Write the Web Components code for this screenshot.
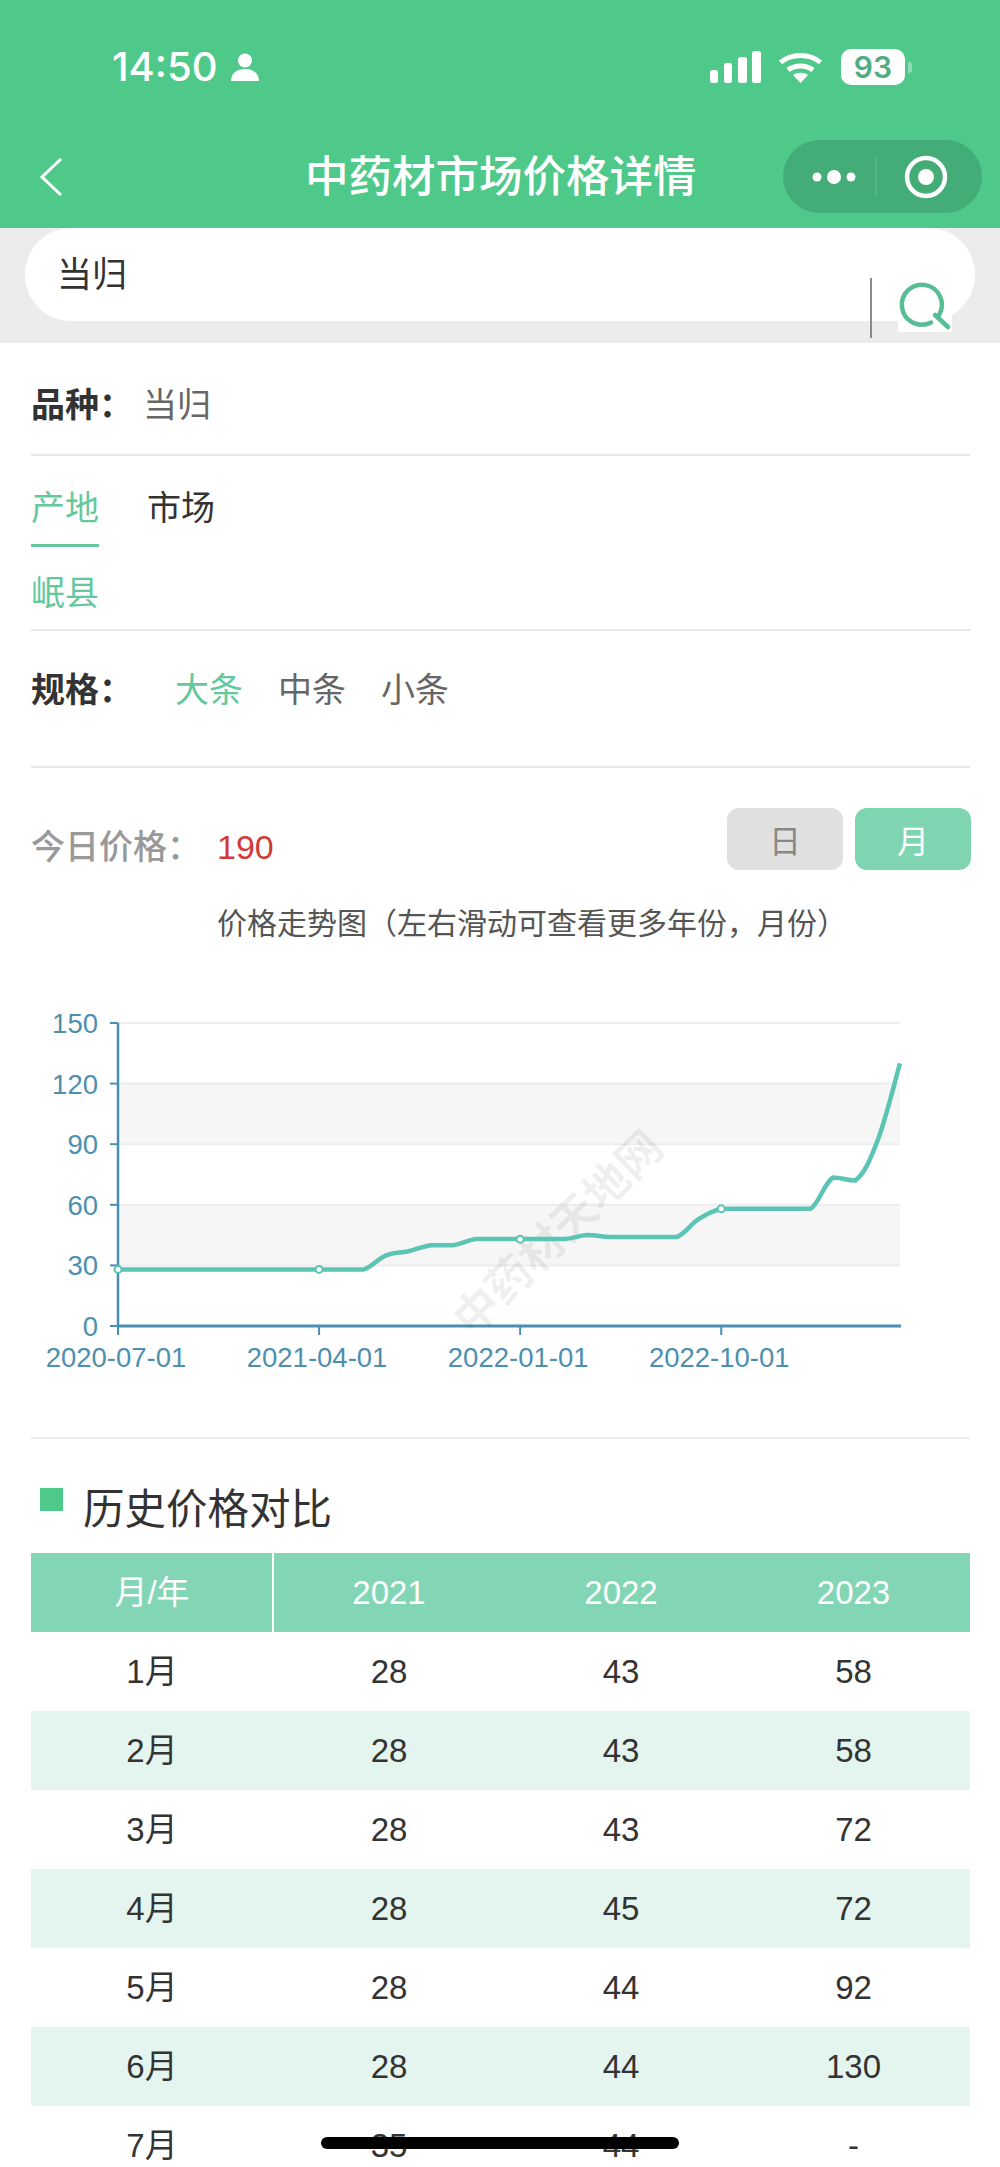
<!DOCTYPE html>
<html lang="zh-CN">
<head>
<meta charset="utf-8">
<title>中药材市场价格详情</title>
<style>
  html, body { margin: 0; padding: 0; background: white; }
  body {
    position: relative;
    width: 1000px;
    height: 2167px;
    overflow: hidden;
    font-family: "Liberation Sans", "Noto Sans CJK SC", sans-serif;
    color: #333;
  }
</style>
</head>
<body>
<status-bar time="14:50" battery="93"></status-bar>
<nav-bar>中药材市场价格详情</nav-bar>
<search-bar>当归</search-bar>
<info-row label="品种">当归</info-row>
<origin-tabs></origin-tabs>
<spec-row label="规格"></spec-row>
<price-row price="190"></price-row>
<price-chart>价格走势图（左右滑动可查看更多年份，月份）</price-chart>
<section-title>历史价格对比</section-title>
<history-table></history-table>
<home-indicator></home-indicator>

<script>
const shadow = (el, html) => {
  el.attachShadow({ mode: 'open' });
  el.shadowRoot.innerHTML = html;
};

customElements.define("status-bar", class extends HTMLElement {
  connectedCallback() {
    if (this.shadowRoot)
      return;
    shadow(this, `
      <style>
        :host {
          display: flex;
          box-sizing: border-box;
          height: 125px;
          padding-top: 9px;
          background: #4fc98a;
          align-items: center;
          color: white;
        }
        .time {
          margin-left: 112px;
          font-family: Inter, "Liberation Sans", sans-serif;
          font-size: 40px;
          font-weight: 500;
          line-height: 48px;
        }
        .person { margin-left: 12px; }
        .signal { margin-left: auto; }
        .wifi { margin-left: 17px; }
        .battery {
          display: flex;
          align-items: center;
          justify-content: center;
          width: 64px;
          height: 36px;
          margin-left: 18px;
          border-radius: 10px;
          background: white;
          color: #52ad84;
          font-family: Inter, "Liberation Sans", sans-serif;
          font-size: 30px;
          font-weight: 600;
          line-height: 36px;
        }
        .tip {
          width: 4px;
          height: 11px;
          margin-left: 3px;
          margin-right: 88px;
          border-radius: 0 3px 3px 0;
          background: #8fdcb5;
        }
      </style>
      <span class=time>${this.getAttribute("time")}</span>
      <svg class=person width=30 height=28 viewBox="0 0 30 28">
        <circle cx=15 cy=7.5 r=7 fill=white />
        <path d="M1 28c0-8 6-12 14-12s14 4 14 12z" fill=white />
      </svg>
      <svg class=signal width=51 height=32 viewBox="0 0 51 32" fill=white>
        <rect x=0 y=19 width=8 height=13 rx=2.5 />
        <rect x=14 y=12 width=8 height=20 rx=2.5 />
        <rect x=28 y=6 width=9 height=26 rx=2.5 />
        <rect x=42 y=0 width=9 height=32 rx=2.5 />
      </svg>
      <svg class=wifi width=45 height=32 viewBox="0 0 45 32" fill=none stroke=white stroke-width=5>
        <path d="M2.5 11.5C13 2 32 2 42.5 11.5" />
        <path d="M10 19c7-5.500 18-5.500 25 0" />
        <path d="M22.500 32l-7.500-8c4-3 11-3 15 0z" fill=white stroke=none />
      </svg>
      <span class=battery>${this.getAttribute("battery")}</span>
      <span class=tip></span>
    `);
  }
});

customElements.define("nav-bar", class extends HTMLElement {
  connectedCallback() {
    if (this.shadowRoot)
      return;
    shadow(this, `
      <style>
        :host {
          display: flex;
          position: relative;
          box-sizing: border-box;
          height: 103px;
          padding-left: 40px;
          background: #4fc98a;
          align-items: center;
          color: white;
        }
        .title {
          margin-left: 243px;
          font-size: 43.500px;
          font-weight: 500;
          line-height: 60px;
          white-space: nowrap;
        }
        .capsule {
          display: flex;
          align-items: center;
          box-sizing: border-box;
          width: 199px;
          height: 73px;
          margin-left: 86px;
          border-radius: 37px;
          background: #43ac77;
        }
        .dots { margin-left: 29px; }
        .sep {
          width: 2px;
          height: 40px;
          margin-left: 19px;
          background: #52b583;
        }
        .target { margin-left: 26px; }
      </style>
      <svg width=22 height=38 viewBox="0 0 22 38" fill=none stroke=white stroke-width=3>
        <path d="M21 1L2 19l19 18" />
      </svg>
      <span class=title><slot></slot></span>
      <div class=capsule>
        <svg class=dots width=44 height=16 viewBox="0 0 44 16" fill=white>
          <circle cx=5 cy=8 r=4.500 />
          <circle cx=22 cy=8 r=7 />
          <circle cx=39 cy=8 r=4.500 />
        </svg>
        <span class=sep></span>
        <svg class=target width=46 height=46 viewBox="0 0 46 46">
          <circle cx=23 cy=23 r=19 fill=none stroke=white stroke-width=4.500 />
          <circle cx=23 cy=23 r=8 fill=white />
        </svg>
      </div>
    `);
  }
});

customElements.define("search-bar", class extends HTMLElement {
  connectedCallback() {
    if (this.shadowRoot)
      return;
    shadow(this, `
      <style>
        :host {
          display: block;
          position: relative;
          box-sizing: border-box;
          height: 115px;
          padding: 0 25px 22px 25px;
          background: #ececec;
        }
        .pill {
          display: flex;
          align-items: center;
          box-sizing: border-box;
          height: 93px;
          padding: 0 0 6px 32px;
          border-radius: 46px;
          background: white;
          color: #333;
          font-size: 35px;
        }
        .sep {
          position: absolute;
          left: 870px;
          top: 50px;
          width: 2px;
          height: 60px;
          background: #8a8a8a;
        }
        .icon {
          position: absolute;
          left: 898px;
          top: 50px;
          background: white;
        }
      </style>
      <div class=pill><slot></slot></div>
      <span class=sep></span>
      <svg class=icon width=54 height=54 viewBox="0 0 54 54" fill=none stroke="#56bd94" stroke-width=4.500 stroke-linecap=round>
        <path d="M33 44.500A20 20 0 1 1 41 37" />
        <path d="M37 37l13 12" />
      </svg>
    `);
  }
});

customElements.define("info-row", class extends HTMLElement {
  connectedCallback() {
    if (this.shadowRoot)
      return;
    shadow(this, `
      <style>
        :host {
          display: flex;
          align-items: center;
          box-sizing: border-box;
          height: 113px;
          margin: 0 30px 0 31px;
          padding-top: 8px;
          border-bottom: 2px solid #e8e8e8;
          font-size: 34px;
        }
        .label { font-weight: bold; color: #333; }
        .colon { font-family: "Noto Sans CJK TC", sans-serif; line-height: 0; }
        .value { margin-left: 10px; color: #666; }
      </style>
      <span class=label>${this.getAttribute("label")}<span class=colon>：</span></span>
      <span class=value><slot></slot></span>
    `);
  }
});

customElements.define("origin-tabs", class extends HTMLElement {
  connectedCallback() {
    if (this.shadowRoot)
      return;
    shadow(this, `
      <style>
        :host {
          display: block;
          margin: 0 30px 0 31px;
          border-bottom: 2px solid #e8e8e8;
          font-size: 34px;
          line-height: 48px;
        }
        .tabs { display: flex; gap: 48px; }
        .tab { padding-top: 28px; height: 60px; color: #333; }
        .tab.active { color: #63c99d; border-bottom: 3px solid #63c99d; }
        .place { margin-top: 22px; padding-bottom: 12px; color: #63c99d; }
      </style>
      <div class=tabs>
        <span class="tab active">产地</span>
        <span class=tab>市场</span>
      </div>
      <div class=place>岷县</div>
    `);
  }
});

customElements.define("spec-row", class extends HTMLElement {
  connectedCallback() {
    if (this.shadowRoot)
      return;
    shadow(this, `
      <style>
        :host {
          display: flex;
          margin: 0 30px 0 31px;
          padding: 35px 0 52px;
          border-bottom: 2px solid #e8e8e8;
          font-size: 34px;
          line-height: 48px;
        }
        .label { width: 144px; font-weight: bold; color: #333; }
        .colon { font-family: "Noto Sans CJK TC", sans-serif; line-height: 0; }
        .opts { display: flex; gap: 35px; color: #666; }
        .on { color: #63c99d; }
      </style>
      <span class=label>${this.getAttribute("label")}<span class=colon>：</span></span>
      <div class=opts>
        <span class=on>大条</span>
        <span>中条</span>
        <span>小条</span>
      </div>
    `);
  }
});

customElements.define("price-row", class extends HTMLElement {
  connectedCallback() {
    if (this.shadowRoot)
      return;
    shadow(this, `
      <style>
        :host {
          display: flex;
          align-items: flex-start;
          margin: 0 29px 0 31px;
          padding-top: 40px;
          font-size: 34px;
        }
        .label {
          margin-top: 16px;
          color: #999;
          font-weight: 500;
          line-height: 46px;
        }
        .colon { font-family: "Noto Sans CJK TC", sans-serif; line-height: 0; }
        .price {
          margin: 16px 0 0 16px;
          color: #d03a3a;
          line-height: 46px;
        }
        .btn {
          display: flex;
          align-items: center;
          justify-content: center;
          width: 116px;
          height: 62px;
          border-radius: 12px;
          font-size: 32px;
        }
        .day { margin-left: auto; background: #e0e0e0; color: #888; }
        .month { margin-left: 12px; background: #7fd4b1; color: white; }
      </style>
      <span class=label>今日价格<span class=colon>：</span></span>
      <span class=price>${this.getAttribute("price")}</span>
      <span class="btn day">日</span>
      <span class="btn month">月</span>
    `);
  }
});

customElements.define("price-chart", class extends HTMLElement {
  connectedCallback() {
    if (this.shadowRoot)
      return;
    const values = [28, 28, 28, 28, 28, 28, 28, 28, 28, 28, 28, 28,
      35, 37, 40, 40, 43, 43, 43, 43, 43, 45, 44, 44, 44, 44, 53, 58,
      58, 58, 58, 58, 73.5, 72, 92, 130];
    const toX = i => 118 + i * (900 - 118) / 35;
    const toY = v => 1326 - v * (1326 - 1023) / 150;
    const pts = values.map((v, i) => [toX(i), toY(v)]);

    // smooth line, control points clamped so flat runs stay flat
    let d = `M${pts[0][0]} ${pts[0][1]}`;
    for (let i = 0; i < pts.length - 1; i++) {
      const p0 = pts[Math.max(i - 1, 0)];
      const p1 = pts[i];
      const p2 = pts[i + 1];
      const p3 = pts[Math.min(i + 2, pts.length - 1)];
      const lo = Math.min(p1[1], p2[1]);
      const hi = Math.max(p1[1], p2[1]);
      const clamp = v => Math.min(hi, Math.max(lo, v));
      const c1y = clamp(p1[1] + (p2[1] - p0[1]) * 0.2);
      const c2y = clamp(p2[1] - (p3[1] - p1[1]) * 0.2);
      const c1x = p1[0] + (p2[0] - p0[0]) * 0.2;
      const c2x = p2[0] - (p3[0] - p1[0]) * 0.2;
      d += `C${c1x.toFixed(1)} ${c1y.toFixed(1)} ${c2x.toFixed(1)} ${c2y.toFixed(1)} ${p2[0].toFixed(1)} ${p2[1].toFixed(1)}`;
    }

    const bands = [[90, 120], [30, 60]].map(([a, b]) =>
      `<rect x=118 y=${toY(b)} width=782 height=${toY(a) - toY(b)} fill="#f6f6f6" />`).join("");
    const yAxis = [150, 120, 90, 60, 30, 0].map(v => `
      ${v ? `<line x1=118 x2=900 y1=${toY(v)} y2=${toY(v)} stroke="#ededed" stroke-width=2 />` : ""}
      <line x1=110 x2=118 y1=${toY(v)} y2=${toY(v)} stroke="#4a8fb2" stroke-width=2 />
      <text x=98 y=${toY(v) + 10} text-anchor=end>${v}</text>`).join("");
    const xAxis = [[0, "2020-07-01"], [9, "2021-04-01"], [18, "2022-01-01"], [27, "2022-10-01"]]
      .map(([i, t]) => `
      <line x1=${toX(i)} x2=${toX(i)} y1=1326 y2=1335 stroke="#4a8fb2" stroke-width=2 />
      <text x=${toX(i) - 2} y=1367 text-anchor=middle>${t}</text>`).join("");
    const dots = [0, 9, 18, 27].map(i =>
      `<circle cx=${toX(i)} cy=${toY(values[i])} r=3.500 fill=white stroke="#5cc4b4" stroke-width=2 />`).join("");

    shadow(this, `
      <style>
        :host { display: block; }
        .caption {
          padding-left: 217px;
          margin: 34px 0 -1px;
          color: #555;
          font-size: 30px;
          line-height: 40px;
        }
        svg { display: block; }
        text { font-size: 27.500px; fill: #4d8fae; }
        .mark { font-size: 45px; fill: #000; fill-opacity: 0.06; font-weight: bold; }
        hr {
          height: 2px;
          margin: 0 30px 0 31px;
          border: 0;
          background: #ececec;
        }
      </style>
      <div class=caption><slot></slot></div>
      <svg width=1000 height=494 viewBox="0 943 1000 494">
        ${bands}
        ${yAxis}
        <line x1=118 x2=118 y1=1023 y2=1327 stroke="#4a8fb2" stroke-width=2.500 />
        <line x1=118 x2=901 y1=1326 y2=1326 stroke="#4a8fb2" stroke-width=3 />
        ${xAxis}
        <text class=mark transform="translate(472 1338) rotate(-44)">中药材天地网</text>
        <path d="${d}" fill=none stroke="#5cc4b4" stroke-width=4.500 />
        ${dots}
      </svg>
      <hr>
    `);
  }
});

customElements.define("section-title", class extends HTMLElement {
  connectedCallback() {
    if (this.shadowRoot)
      return;
    shadow(this, `
      <style>
        :host {
          display: flex;
          align-items: flex-start;
          gap: 20px;
          box-sizing: border-box;
          height: 114px;
          padding: 0 0 0 40px;
        }
        .square {
          width: 23px;
          height: 23px;
          margin-top: 49px;
          background: #4fc98a;
        }
        .text {
          margin-top: 43px;
          color: #333;
          font-size: 41.500px;
          line-height: 56px;
        }
      </style>
      <span class=square></span>
      <span class=text><slot></slot></span>
    `);
  }
});

customElements.define("history-table", class extends HTMLElement {
  connectedCallback() {
    if (this.shadowRoot)
      return;
    const rows = [
      ["1月", 28, 43, 58],
      ["2月", 28, 43, 58],
      ["3月", 28, 43, 72],
      ["4月", 28, 45, 72],
      ["5月", 28, 44, 92],
      ["6月", 28, 44, 130],
      ["7月", 35, 44, "-"],
    ];
    const cells = r => r.map(c => `<span>${c}</span>`).join("");
    shadow(this, `
      <style>
        :host {
          display: block;
          margin: 0 30px 0 31px;
          color: #333;
          font-size: 33px;
        }
        .row {
          display: grid;
          grid-template-columns: 242px 232px 232px 233px;
          height: 79px;
          align-items: center;
          text-align: center;
        }
        .row > span:first-child { margin-top: -5px; }
        .row.head { background: #82d6b5; color: white; position: relative; }
        .row.head::after {
          content: "";
          position: absolute;
          left: 241px;
          top: 0;
          bottom: 0;
          width: 2px;
          background: white;
        }
        .row:nth-child(even):not(.head) { background: #e3f5ee; }
      </style>
      <div class="row head">${cells(["月/年", 2021, 2022, 2023])}</div>
      ${rows.map(r => `<div class=row>${cells(r)}</div>`).join("")}
    `);
  }
});

customElements.define("home-indicator", class extends HTMLElement {
  connectedCallback() {
    if (this.shadowRoot)
      return;
    shadow(this, `
      <style>
        :host {
          position: absolute;
          left: 321px;
          top: 2137px;
          width: 358px;
          height: 12px;
          border-radius: 6px;
          background: black;
        }
      </style>
    `);
  }
});
</script>
</body>
</html>
